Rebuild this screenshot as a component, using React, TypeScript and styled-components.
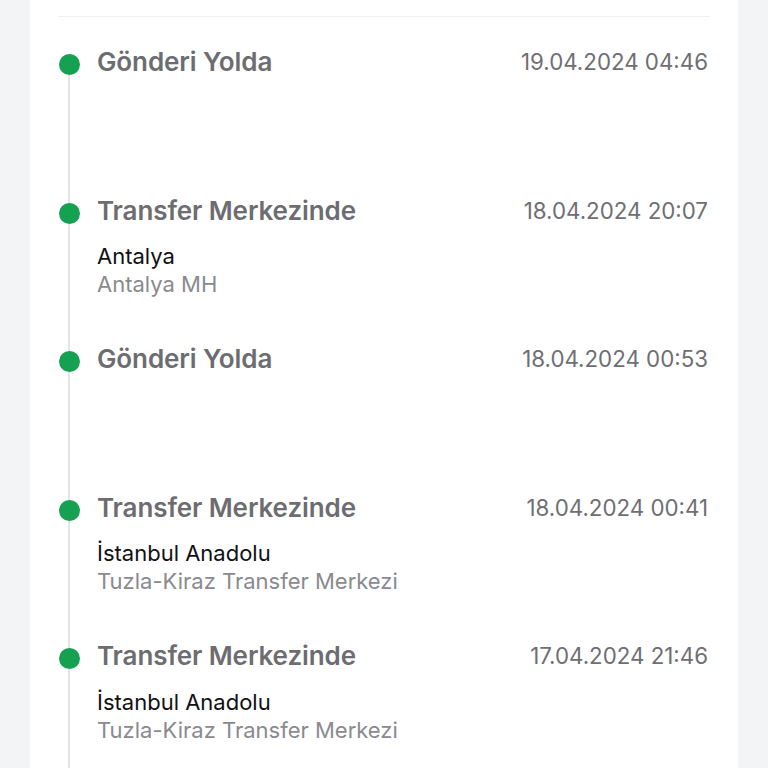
import React from "react";
import styled, { createGlobalStyle } from "styled-components";

const Global = createGlobalStyle`
  html, body { margin: 0; padding: 0; background: #f3f4f6; }
  body { font-family: Inter, "Noto Sans", sans-serif; -webkit-font-smoothing: antialiased; }
`;

const Page = styled.div`
  padding: 0 30px;
  height: 768px;
  overflow: hidden;
`;

const Card = styled.div`
  background: #ffffff;
  padding: 16px 28px 0;
  min-height: 768px;
`;

const Divider = styled.div`
  height: 1px;
  background: #efeff1;
  margin-bottom: 35px;
`;

const List = styled.div`
  display: flex;
  flex-direction: column;
`;

const Item = styled.div`
  display: grid;
  grid-template-columns: 22px 1fr;
  column-gap: 17px;
  height: 148.5px;
`;

const Rail = styled.div`
  display: flex;
  flex-direction: column;
  align-items: center;
`;

const Dot = styled.div`
  width: 21px;
  height: 21px;
  border-radius: 50%;
  background: #15a052;
  flex: none;
`;

const Line = styled.div`
  width: 2px;
  flex: 1;
  background: #e4e4e7;
`;

const LeadLine = styled.div<{ $hidden?: boolean }>`
  width: 2px;
  height: 2px;
  flex: none;
  background: ${(p) => (p.$hidden ? "transparent" : "#e4e4e7")};
`;

const Content = styled.div`
  display: flex;
  flex-direction: column;
`;

const Header = styled.div`
  display: flex;
  justify-content: space-between;
  align-items: center;
  height: 19px;
`;

const Title = styled.div`
  font-size: 26px;
  font-weight: 600;
  color: #6c6c71;
  letter-spacing: -0.1px;
`;

const DateText = styled.div`
  font-size: 22.3px;
  font-weight: 400;
  color: #6e6e73;
  margin-right: 2px;
`;

const Details = styled.div`
  margin-top: 22.5px;
  display: flex;
  flex-direction: column;
`;

const Place = styled.div<{ $muted?: boolean }>`
  font-size: 22px;
  line-height: 28px;
  color: ${(p) => (p.$muted ? "#8a8a8f" : "#111114")};
`;

type Event = { title: string; date: string; city?: string; hub?: string };

const events: Event[] = [
  { title: "Gönderi Yolda", date: "19.04.2024 04:46" },
  { title: "Transfer Merkezinde", date: "18.04.2024 20:07", city: "Antalya", hub: "Antalya MH" },
  { title: "Gönderi Yolda", date: "18.04.2024 00:53" },
  { title: "Transfer Merkezinde", date: "18.04.2024 00:41", city: "İstanbul Anadolu", hub: "Tuzla-Kiraz Transfer Merkezi" },
  { title: "Transfer Merkezinde", date: "17.04.2024 21:46", city: "İstanbul Anadolu", hub: "Tuzla-Kiraz Transfer Merkezi" },
];

export default function App() {
  return (
    <>
      <Global />
      <Page>
        <Card>
          <Divider />
          <List>
            {events.map((e, i) => (
              <Item key={i}>
                <Rail>
                  <LeadLine $hidden={i === 0} />
                  <Dot />
                  <Line />
                </Rail>
                <Content>
                  <Header>
                    <Title>{e.title}</Title>
                    <DateText>{e.date}</DateText>
                  </Header>
                  {e.city && (
                    <Details>
                      <Place>{e.city}</Place>
                      <Place $muted>{e.hub}</Place>
                    </Details>
                  )}
                </Content>
              </Item>
            ))}
          </List>
        </Card>
      </Page>
    </>
  );
}
